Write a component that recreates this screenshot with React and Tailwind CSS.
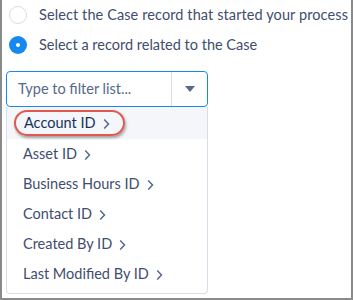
import React from 'react';

const items = ['Account ID', 'Asset ID', 'Business Hours ID', 'Contact ID', 'Created By ID', 'Last Modified By ID'];

const Chevron = () => (
  <svg width="7" height="12" viewBox="0 0 7 12" className="ml-[7px] mt-[1px]">
    <path d="M1.2 1.5 L5.5 6 L1.2 10.5" fill="none" stroke="#54698d" strokeWidth="1.5" />
  </svg>
);

const App = () => {
  return (
    <div
      className="w-[353px] h-[300px] bg-white border-l-2 border-r-2 border-b-2 border-[#8a8a8a] text-[#3f4d6e] text-[14.5px] overflow-hidden whitespace-nowrap"
      style={{ fontFamily: 'Lato, "Liberation Sans", sans-serif' }}
    >
      {/* Radio options */}
      <div className="flex items-center h-[30px] pl-[7px]">
        <span className="w-[18px] h-[18px] rounded-full border border-[#d8dde6] bg-white shrink-0" />
        <span className="ml-[12px] tracking-[0.1px]">Select the Case record that started your process</span>
      </div>
      <div className="flex items-center h-[30px] pl-[7px]">
        <span className="w-[18px] h-[18px] rounded-full bg-[#1589ee] flex items-center justify-center shrink-0">
          <span className="w-[4px] h-[4px] rounded-full bg-white" />
        </span>
        <span className="ml-[12px]">Select a record related to the Case</span>
      </div>

      {/* Combobox */}
      <div className="ml-[4px] mt-[11px] w-[202px]">
        <div className="flex h-[36px] border border-[#1589ee] rounded-[4px] bg-white">
          <div className="flex-1 flex items-center pl-[11px] text-[#54698d]">Type to filter list...</div>
          <div className="w-[36px] border-l border-[#d8dde6] flex items-center justify-center">
            <svg width="10" height="6" viewBox="0 0 10 6">
              <path d="M0 0 H10 L5 6 Z" fill="#54698d" />
            </svg>
          </div>
        </div>
        <div className="border border-t-0 border-[#d8dde6] rounded-b-[4px] bg-white h-[187px]">
          {items.map((label, i) => (
            <div
              key={label}
              className={`flex items-center pl-[16px] ${i === 0 ? 'bg-[#f4f6f9] h-[32px]' : 'h-[30px]'}`}
            >
              {i === 0 ? (
                <span className="flex items-center h-[26px] -ml-[9px] pl-[8px] pr-[13px] rounded-full border-2 border-[#e0584f] shadow-[1px_2px_3px_rgba(0,0,0,0.35)]">
                  <span className="text-[#16325c]">{label}</span>
                  <Chevron />
                </span>
              ) : (
                <>
                  <span>{label}</span>
                  <Chevron />
                </>
              )}
            </div>
          ))}
        </div>
      </div>
    </div>
  );
};

export default App;
